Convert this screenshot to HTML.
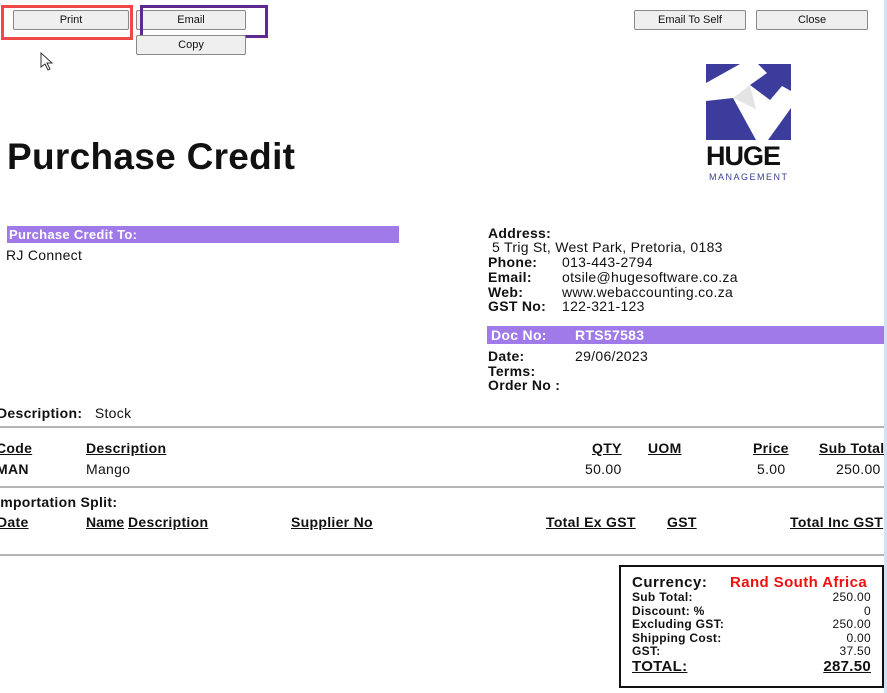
<!DOCTYPE html>
<html><head><style>
body{margin:0;width:887px;height:693px;overflow:hidden;background:#fff;position:relative;font-family:"Liberation Sans",Arial,sans-serif;font-size:14px;color:#111;letter-spacing:0.3px}
.a{position:absolute;white-space:nowrap}
.btn{position:absolute;height:18px;background:#efefef;border:1px solid #888;border-radius:2px;font-size:11px;text-align:center;line-height:18px;color:#111;letter-spacing:0}
.b{font-weight:bold}
.u{text-decoration:underline;font-weight:bold}
.hr{position:absolute;left:0;width:884px;height:2px;background:#b5b5b5}
.r{text-align:right}
</style></head><body>
<div class="btn" style="left:13px;top:10px;width:114px">Print</div>
<div class="a" style="left:1px;top:5px;width:126px;height:29px;border:3px solid #f04848"></div>
<div class="btn" style="left:136px;top:10px;width:108px">Email</div>
<div class="a" style="left:140px;top:5px;width:122px;height:27px;border:3px solid #5d2a91"></div>
<div class="btn" style="left:136px;top:35px;width:108px">Copy</div>
<div class="btn" style="left:634px;top:10px;width:110px">Email To Self</div>
<div class="btn" style="left:756px;top:10px;width:110px">Close</div>
<svg class="a" style="left:40px;top:52px" width="16" height="20" viewBox="0 0 16 20"><path d="M1 1 L1 15 L5 12 L8 18 L10 17 L7 11 L12 11 Z" fill="#fff" stroke="#333" stroke-width="1"/></svg>
<svg class="a" style="left:706px;top:64px" width="85" height="76" viewBox="0 0 85 76">
<rect width="85" height="76" fill="#3c3c9c"/>
<path d="M0 19 L34 0 L52 0 L61 9 L44 21 L64 36 L76 22 L85 27 L85 44 L62 76 L50 76 L27 34 L0 37 Z" fill="#fff"/>
<path d="M27 34 L44 21 L50 45 Z" fill="#e4e4e4"/>
</svg>
<div class="a b" style="left:706px;top:141px;font-size:27px;letter-spacing:-1px;color:#111">HUGE</div>
<div class="a" style="left:709px;top:172px;font-size:9px;letter-spacing:1.5px;color:#3c3c9c">MANAGEMENT</div>
<div class="a b" style="left:7px;top:136px;font-size:37px;letter-spacing:0.3px">Purchase Credit</div>
<div class="a b" style="left:7px;top:226px;width:390px;height:17px;background:#a07ae8;color:#fff;line-height:17px;padding-left:2px;font-size:13px">Purchase Credit To:</div>
<div class="a" style="left:6px;top:247px">RJ Connect</div>
<div class="a b" style="left:488px;top:225px">Address:</div>
<div class="a" style="left:492px;top:239px">5 Trig St, West Park, Pretoria, 0183</div>
<div class="a b" style="left:488px;top:254px">Phone:</div><div class="a" style="left:562px;top:254px">013-443-2794</div>
<div class="a b" style="left:488px;top:269px">Email:</div><div class="a" style="left:562px;top:269px">otsile@hugesoftware.co.za</div>
<div class="a b" style="left:488px;top:284px">Web:</div><div class="a" style="left:562px;top:284px">www.webaccounting.co.za</div>
<div class="a b" style="left:488px;top:298px">GST No:</div><div class="a" style="left:562px;top:298px">122-321-123</div>
<div class="a b" style="left:487px;top:326px;width:397px;height:18px;background:#a07ae8;color:#fff;line-height:18px"><span style="margin-left:4px">Doc No:</span><span style="position:absolute;left:88px">RTS57583</span></div>
<div class="a b" style="left:488px;top:348px">Date:</div><div class="a" style="left:575px;top:348px">29/06/2023</div>
<div class="a b" style="left:488px;top:363px">Terms:</div>
<div class="a b" style="left:488px;top:377px">Order No :</div>
<div class="a" style="left:-3px;top:405px"><b>Description:</b>&nbsp;&nbsp;&nbsp;Stock</div>
<div class="hr" style="top:426px"></div>
<div class="a u" style="left:-4px;top:440px">Code</div>
<div class="a u" style="left:86px;top:440px">Description</div>
<div class="a u" style="left:592px;top:440px">QTY</div>
<div class="a u" style="left:648px;top:440px">UOM</div>
<div class="a u" style="left:753px;top:440px">Price</div>
<div class="a u" style="left:819px;top:440px">Sub Total</div>
<div class="a b" style="left:-4px;top:461px">MAN</div>
<div class="a" style="left:86px;top:461px">Mango</div>
<div class="a" style="left:585px;top:461px">50.00</div>
<div class="a" style="left:757px;top:461px">5.00</div>
<div class="a" style="left:836px;top:461px">250.00</div>
<div class="hr" style="top:486px"></div>
<div class="a b" style="left:-4px;top:494px">Importation Split:</div>
<div class="a u" style="left:-3px;top:514px">Date</div>
<div class="a u" style="left:86px;top:514px;letter-spacing:0">Name</div>
<div class="a u" style="left:128px;top:514px">Description</div>
<div class="a u" style="left:291px;top:514px">Supplier No</div>
<div class="a u" style="left:546px;top:514px">Total Ex GST</div>
<div class="a u" style="left:667px;top:514px">GST</div>
<div class="a u" style="left:790px;top:514px">Total Inc GST</div>
<div class="hr" style="top:554px"></div>
<div class="a" style="left:619px;top:565px;width:261px;height:119px;border:2px solid #111"></div>
<div class="a b" style="left:632px;top:574px;font-size:15px;letter-spacing:0.5px">Currency:</div>
<div class="a b" style="left:730px;top:574px;font-size:15px;color:#f01010;letter-spacing:0.4px">Rand South Africa</div>
<div class="a b" style="left:632px;top:591px;font-size:12px;line-height:13.5px;letter-spacing:0.3px">Sub Total:<br>Discount: %<br>Excluding GST:<br>Shipping Cost:<br>GST:</div>
<div class="a r" style="left:760px;width:111px;top:591px;font-size:12px;line-height:13.5px;letter-spacing:0.3px">250.00<br>0<br>250.00<br>0.00<br>37.50</div>
<div class="a u" style="left:632px;top:658px;font-size:15px">TOTAL:</div>
<div class="a u r" style="left:760px;width:111px;top:658px;font-size:15px">287.50</div>
<div class="a" style="left:884px;top:0;width:3px;height:693px;background:#cfe3f7"></div>
</body></html>
